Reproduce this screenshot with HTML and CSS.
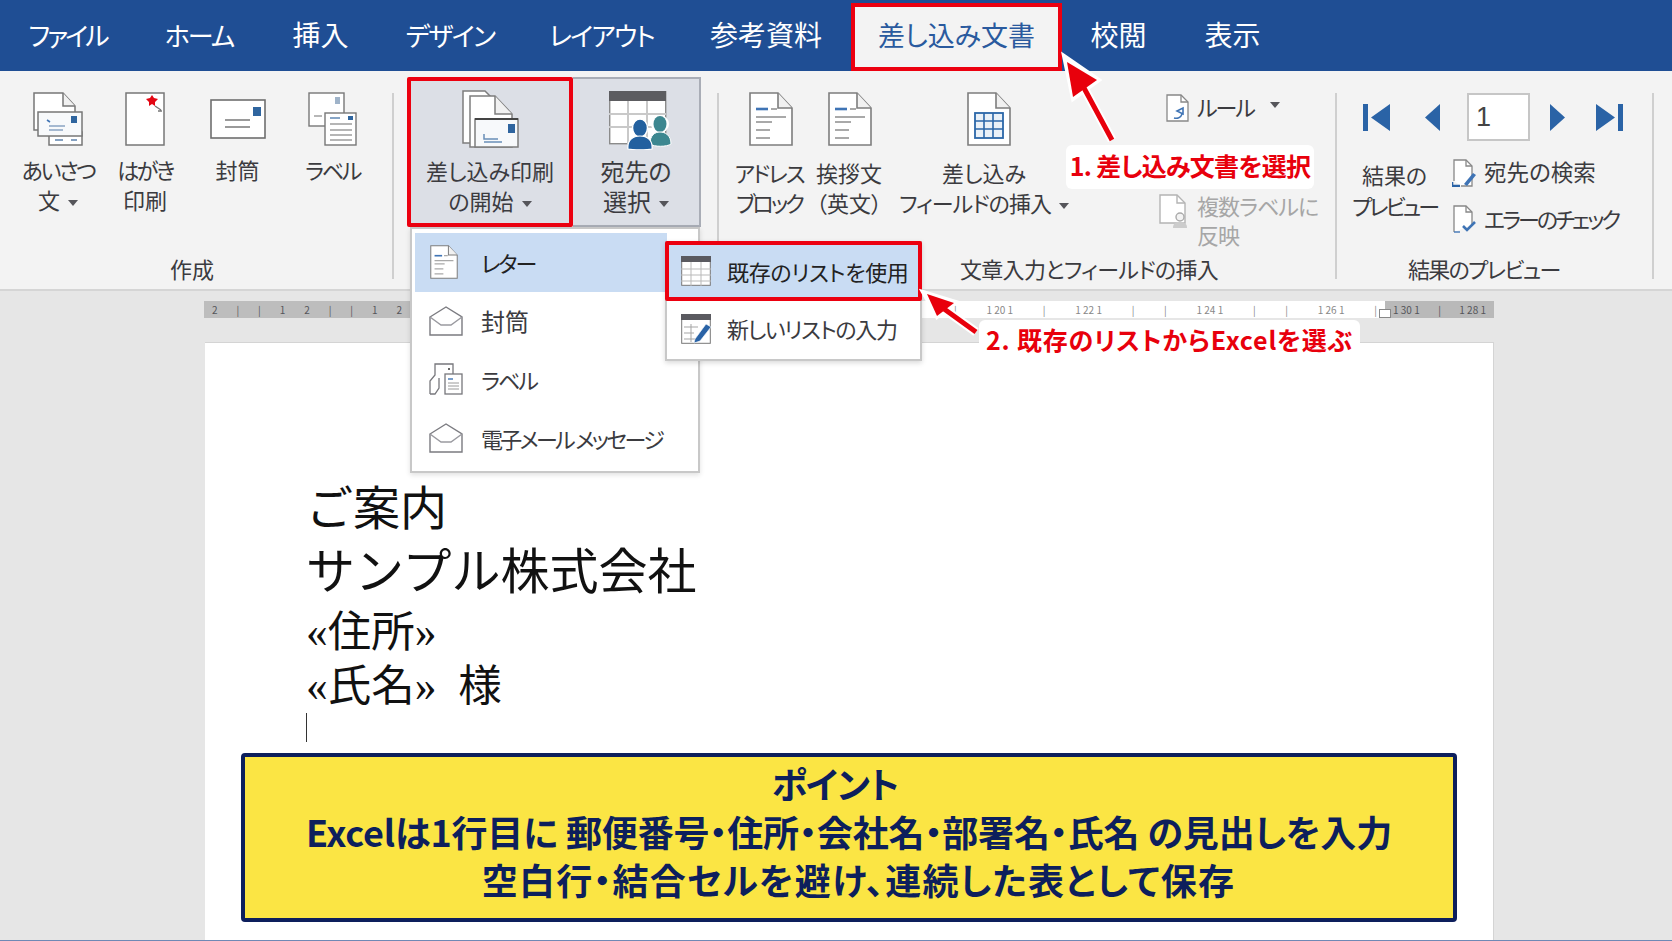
FILE: index.html
```html
<!DOCTYPE html>
<html lang="ja">
<head>
<meta charset="utf-8">
<title>差し込み文書</title>
<link rel="stylesheet" href="styles.css">
</head>
<body>
<svg class="defs" width="0" height="0" aria-hidden="true">
  <defs>
    <symbol id="page" viewBox="0 0 44 54">
      <path d="M1 1h28l14 15v37H1z" fill="#fff" stroke="#7d7d7d" stroke-width="1.6"/>
      <path d="M29 1v15h14" fill="#f1f1f1" stroke="#7d7d7d" stroke-width="1.6"/>
      <path d="M7 17h12" stroke="#3f74b5" stroke-width="2.6"/>
      <path d="M22 17h6M7 25h30M7 30h16M7 38h14M7 46h14" stroke="#a9a9a9" stroke-width="2"/>
    </symbol>
    <symbol id="openmail" viewBox="0 0 34 30">
      <path d="M1 11L17 1l16 10v18H1z" fill="#fff" stroke="#7b7b80" stroke-width="1.4"/>
      <path d="M1 11l11 8h10l11-8" fill="none" stroke="#9a9aa0" stroke-width="1.4"/>
    </symbol>
    <symbol id="tablehead" viewBox="0 0 30 30">
      <rect x=".7" y=".7" width="28.6" height="28.6" fill="#fff" stroke="#777"/>
      <rect x="0" y="0" width="30" height="6" fill="#5a5a60"/>
    </symbol>
  </defs>
</svg>

<div class="app">
  <nav class="tabs">
    <div class="tab kana k30">ファイル</div>
    <div class="tab kana k20">ホーム</div>
    <div class="tab">挿入</div>
    <div class="tab kana k16">デザイン</div>
    <div class="tab kana k17">レイアウト</div>
    <div class="tab">参考資料</div>
    <div class="tab tab-active">差し込み文書</div>
    <div class="tab">校閲</div>
    <div class="tab">表示</div>
  </nav>

  <section class="ribbon">
    <div class="group group-create">
      <div class="group-body">
        <div class="rbtn w102">
          <div class="ricon">
            <svg width="50" height="54" viewBox="0 0 50 54">
              <path d="M1 1h29l12 13v24H1z" fill="#fff" stroke="#777" stroke-width="1.5"/>
              <path d="M30 1v13h12" fill="#f1f1f1" stroke="#777" stroke-width="1.5"/>
              <rect x="16" y="40" width="33" height="13" fill="#fff" stroke="#777" stroke-width="1.5"/>
              <rect x="5" y="20" width="44" height="24" fill="#f7f9fb" stroke="#777" stroke-width="1.5"/>
              <rect x="38" y="24" width="6" height="7" fill="#2f659f"/>
              <path d="M16 34h16M16 38h14" stroke="#8aa4c4" stroke-width="1.6"/>
              <path d="M14 28l3 2" stroke="#3f74b5" stroke-width="1.6"/>
              <path d="M38 48h6M22 48h8" stroke="#5d83ad" stroke-width="1.6"/>
            </svg>
          </div>
          <div class="rlabel"><span class="t24">あいさつ</span><br>文<i class="caret"></i></div>
        </div>
        <div class="rbtn w88">
          <div class="ricon">
            <svg width="40" height="54" viewBox="0 0 40 54">
              <rect x="1" y="1" width="38" height="52" fill="#fff" stroke="#777" stroke-width="1.5"/>
              <path d="M27 3l2 3 4 1-3 3 0 4-3-2-3 2 0-4-3-3 4-1z" fill="#e30613"/>
              <path d="M30 14l6 4M33 19h4" stroke="#777" stroke-width="1.4"/>
            </svg>
          </div>
          <div class="rlabel"><span class="t24">はがき</span><br>印刷</div>
        </div>
        <div class="rbtn w95">
          <div class="ricon">
            <svg width="56" height="40" viewBox="0 0 56 40">
              <rect x="1" y="1" width="54" height="38" fill="#fff" stroke="#6f6f6f" stroke-width="1.6"/>
              <rect x="43" y="8" width="8" height="9" fill="#2f659f"/>
              <path d="M15 21h25M15 28h25" stroke="#9a9a9a" stroke-width="1.8"/>
            </svg>
          </div>
          <div class="rlabel">封筒</div>
        </div>
        <div class="rbtn w95">
          <div class="ricon">
            <svg width="49" height="54" viewBox="0 0 49 54">
              <rect x="1" y="1" width="35" height="33" fill="#fff" stroke="#777" stroke-width="1.4"/>
              <path d="M27 5h5v7h-5z" fill="#9fb3c9"/>
              <path d="M6 24h8" stroke="#999" stroke-width="1.4"/>
              <rect x="17" y="21" width="31" height="32" fill="#fff" stroke="#777" stroke-width="1.4"/>
              <path d="M22 26h10" stroke="#6a8fb8" stroke-width="1.6"/>
              <rect x="40" y="24" width="5" height="4" fill="#2f659f"/>
              <path d="M22 32h22M22 38h22M22 43h22M22 48h22" stroke="#9d9d9d" stroke-width="1.4"/>
            </svg>
          </div>
          <div class="rlabel"><span class="t24">ラベル</span></div>
        </div>
      </div>
      <div class="group-title title-create">作成</div>
    </div>
    <div class="sep"></div>

    <div class="group group-start">
      <div class="start-buttons">
        <div class="rbtn start-main">
          <div class="ricon ricon-start">
            <svg width="57" height="58" viewBox="0 0 57 58">
              <path d="M1 1h22l8 8v44H1z" fill="#fff" stroke="#7d7d7d" stroke-width="1.5"/>
              <path d="M8 6h25l17 18v33H8z" fill="#fff" stroke="#7d7d7d" stroke-width="1.5"/>
              <path d="M33 6v18h17" fill="#f1f1f1" stroke="#7d7d7d" stroke-width="1.5"/>
              <rect x="13" y="29" width="43" height="28" fill="#f7f9fb" stroke="#7d7d7d" stroke-width="1.5"/>
              <path d="M13 29h43" stroke="#444" stroke-width="1.8"/>
              <rect x="46" y="34" width="7" height="9" fill="#2f659f"/>
              <path d="M22 44v5h14M22 52h18" stroke="#6a8fb8" stroke-width="1.5" fill="none"/>
            </svg>
          </div>
          <div class="rlabel">差し込み印刷<br>の開始<i class="caret"></i></div>
        </div>
        <div class="rbtn start-side">
          <div class="ricon ricon-start ricon-people">
            <svg width="63" height="59" viewBox="0 0 63 59">
              <rect x=".7" y=".7" width="56" height="52" fill="#fff" stroke="#8b8b8b" stroke-width="1.4"/>
              <rect x="0" y="0" width="57" height="10" fill="#5c5c60"/>
              <path d="M0 23h57M0 36h57M19 10v43M38 10v43" stroke="#c9c9c9" stroke-width="2"/>
              <circle cx="51" cy="33" r="9" fill="#fff"/>
              <ellipse cx="51" cy="33" rx="6.5" ry="8" fill="#3d8790"/>
              <path d="M41 53c0-9 5-12 10-12s11 3 11 12c-4 3-17 3-21 0z" fill="#3d8790" stroke="#fff" stroke-width="1"/>
              <ellipse cx="31" cy="37" rx="7.5" ry="9" fill="#22609f" stroke="#fff" stroke-width="1.5"/>
              <path d="M19 58c-1-9 5-13 12-13s13 4 12 13c-5 1-19 1-24 0z" fill="#22609f" stroke="#fff" stroke-width="1.2"/>
            </svg>
          </div>
          <div class="rlabel">宛先の<br>選択<i class="caret"></i></div>
        </div>
      </div>
    </div>
    <div class="sep"></div>

    <div class="group group-fields">
      <div class="group-body fields-body">
        <div class="rbtn w80">
          <div class="ricon ricon-field nudge-a"><svg width="44" height="54"><use href="#page"/></svg></div>
          <div class="rlabel"><span class="t20">アドレス</span><br><span class="t30">ブロック</span></div>
        </div>
        <div class="rbtn w80">
          <div class="ricon ricon-field nudge-b"><svg width="44" height="54"><use href="#page"/></svg></div>
          <div class="rlabel">挨拶文<br>（英文）</div>
        </div>
        <div class="rbtn w190">
          <div class="ricon ricon-field nudge-c">
            <svg width="44" height="54" viewBox="0 0 44 54">
              <path d="M1 1h28l14 15v37H1z" fill="#fff" stroke="#7d7d7d" stroke-width="1.6"/>
              <path d="M29 1v15h14" fill="#f1f1f1" stroke="#7d7d7d" stroke-width="1.6"/>
              <rect x="8" y="21" width="28" height="25" fill="#eaf1f8" stroke="#2b66a8" stroke-width="1.8"/>
              <path d="M8 29h28M8 37h28M17 21v25M26 21v25" stroke="#2b66a8" stroke-width="1.6"/>
            </svg>
          </div>
          <div class="rlabel">差し込み<br><span class="t10">フィールドの挿入</span><i class="caret"></i></div>
        </div>
        <div class="small-col">
          <div class="small-row">
            <svg class="small-icon" width="24" height="28" viewBox="0 0 24 28">
              <path d="M1 1h14l7 7v19H1z" fill="#fff" stroke="#888" stroke-width="1.3"/>
              <path d="M15 1v7h7" fill="none" stroke="#888" stroke-width="1.3"/>
              <path d="M11 17l6-3v6zM8 24c4 1 7-1 8-4" fill="none" stroke="#3f74b5" stroke-width="1.6"/>
            </svg>
            <span class="small-text t20">ルール</span><i class="caret caret-far"></i>
          </div>
          <i class="hidden-row"></i>
          <div class="small-row small-row-off">
            <svg class="small-icon" width="28" height="35" viewBox="0 0 28 35">
              <path d="M1 1h17l8 8v20H1z" fill="#fff" stroke="#b4b4b4" stroke-width="1.4"/>
              <path d="M18 1v8h8" fill="none" stroke="#b4b4b4" stroke-width="1.4"/>
              <circle cx="21" cy="23" r="4" fill="#f3f3f3" stroke="#aaa" stroke-width="1.4"/>
              <path d="M14 34c0-5 3-6 7-6s7 1 7 6z" fill="#ccc"/>
            </svg>
            <span class="small-text t10">複数ラベルに<br>反映</span>
          </div>
        </div>
      </div>
      <div class="group-title title-fields t07">文章入力とフィールドの挿入</div>
    </div>
    <div class="sep"></div>

    <div class="group group-preview">
      <div class="pager">
        <svg class="nav-first" width="27" height="27" viewBox="0 0 27 27"><path d="M0 0h5v27H0zM27 0v27L8 13.500z" fill="#2a63a6"/></svg>
        <svg class="nav-prev" width="15" height="27" viewBox="0 0 15 27"><path d="M15 0v27L0 13.500z" fill="#2a63a6"/></svg>
        <div class="pager-input">1</div>
        <svg class="nav-next" width="15" height="27" viewBox="0 0 15 27"><path d="M0 0v27l15-13.500z" fill="#2a63a6"/></svg>
        <svg class="nav-last" width="27" height="27" viewBox="0 0 27 27"><path d="M22 0h5v27h-5zM0 0v27l19-13.500z" fill="#2a63a6"/></svg>
      </div>
      <div class="preview-body">
        <div class="rlabel preview-big">結果の<br><span class="t30">プレビュー</span></div>
        <div class="preview-list">
          <div class="preview-row">
            <svg width="25" height="28" viewBox="0 0 25 28">
              <path d="M2 22V1h12l6 6v20H9" fill="#fff" stroke="#888" stroke-width="1.3"/>
              <path d="M14 1v6h6" fill="none" stroke="#888" stroke-width="1.3"/>
              <path d="M0 23v4h8" fill="none" stroke="#2a63a6" stroke-width="2.6"/>
              <path d="M12 25l9-11 3 2-9 11z" fill="#3f74b5"/>
            </svg>
            <span class="row-wide">宛先の検索</span>
          </div>
          <div class="preview-row">
            <svg width="25" height="28" viewBox="0 0 25 28">
              <path d="M2 27V1h12l6 6v13" fill="#fff" stroke="#888" stroke-width="1.3"/>
              <path d="M14 1v6h6" fill="none" stroke="#888" stroke-width="1.3"/>
              <path d="M11 21l4 4 8-8" fill="none" stroke="#3f74b5" stroke-width="2.6"/>
              <path d="M2 27h6" stroke="#3f74b5" stroke-width="1.4"/>
            </svg>
            <span class="t30">エラーのチェック</span>
          </div>
        </div>
      </div>
      <div class="group-title title-preview t17">結果のプレビュー</div>
    </div>
    <div class="sep"></div>
  </section>

  <main class="doc">
    <div class="ruler">
      <div class="ruler-seg ruler-left"><span>2</span><span>|</span><span>|</span><span>1</span><span>2</span><span>|</span><span>|</span><span>1</span><span>2</span></div>
      <div class="ruler-seg ruler-mid"><span>|</span><span>1 20 1</span><span>|</span><span>1 22 1</span><span>|</span><span>|</span><span>1 24 1</span><span>|</span><span>|</span><span>1 26 1</span><span>|</span><i class="indent"></i></div>
      <div class="ruler-seg ruler-right"><span>1 30 1</span><span>|</span><span>1 28 1</span></div>
    </div>
    <article class="page">
      <p class="l1">ご案内</p>
      <p class="l2">サンプル株式会社</p>
      <p class="l3">«住所»</p>
      <p class="l3">«氏名»&nbsp;&nbsp;様</p>
      <div class="cursor"></div>
      <div class="point">
        <p class="point-head">ポイント</p>
        <p class="point-main">Excelは1行目に 郵便番号・住所・会社名・部署名・氏名 の見出しを入力</p>
        <p class="point-sub">空白行・結合セルを避け、連続した表として保存</p>
      </div>
    </article>
  </main>

  <div class="menu">
    <div class="menu-row menu-row-on">
      <svg width="30" height="34"><use href="#page" width="30" height="34"/></svg><span class="t20">レター</span>
    </div>
    <div class="menu-row">
      <svg width="34" height="30"><use href="#openmail"/></svg><span class="wide-row">封筒</span>
    </div>
    <div class="menu-row">
      <svg width="34" height="32" viewBox="0 0 34 32">
        <path d="M1 31V18l5-6V1h18v10" fill="none" stroke="#77777c" stroke-width="1.3"/>
        <path d="M1 31h5l4-6V15" fill="none" stroke="#77777c" stroke-width="1.3"/>
        <rect x="16" y="11" width="17" height="20" fill="#fff" stroke="#77777c" stroke-width="1.3"/>
        <path d="M19 16h5" stroke="#3f74b5" stroke-width="1.4"/>
        <path d="M19 20h11M19 23h11M19 26h11" stroke="#9a9a9a"/>
        <rect x="19" y="5" width="2" height="2" fill="#666"/>
      </svg><span class="t20">ラベル</span>
    </div>
    <div class="menu-row">
      <svg width="34" height="30"><use href="#openmail"/></svg><span class="t27">電子メール メッセージ</span>
    </div>
  </div>

  <div class="submenu">
    <div class="sub-row sub-row-on">
      <svg width="30" height="30" viewBox="0 0 30 30">
        <use href="#tablehead" width="30" height="30"/>
        <path d="M0 13h30M0 19h30M0 25h30M10 6v24M20 6v24" stroke="#b9b9b9"/>
      </svg><span class="t03">既存のリストを使用</span>
    </div>
    <div class="sub-row sub-row-new">
      <svg width="30" height="30" viewBox="0 0 30 30">
        <use href="#tablehead" width="30" height="30"/>
        <path d="M3 13h14M3 19h10M3 25h14M10 10v18" stroke="#a5a5a5"/>
        <path d="M14 25l11-15 5 3-11 14-6 2z" fill="#2a63a6" stroke="#fff" stroke-width=".6"/>
      </svg><span class="t13">新しいリストの入力</span>
    </div>
  </div>

  <div class="note note-one">1. 差し込み文書を選択</div>
  <div class="note note-two">2. 既存のリストからExcelを選ぶ</div>

  <svg class="arrows" width="1672" height="941" viewBox="0 0 1672 941" aria-hidden="true">
    <g fill="none" stroke="#fff" stroke-width="9">
      <path d="M1112 140L1084 88"/>
      <path d="M976 332L940 306"/>
    </g>
    <path d="M1064 56l35 24-26 19z" fill="#fff" stroke="#fff" stroke-width="4"/>
    <path d="M923 292l33 10-19 15z" fill="#fff" stroke="#fff" stroke-width="4"/>
    <path d="M1112 140L1084 88M976 332L940 306" fill="none" stroke="#e8000c" stroke-width="5"/>
    <path d="M1067 62l30 18-24 17z" fill="#e8000c"/>
    <path d="M927 294l27 9-17 13z" fill="#e8000c"/>
  </svg>
</div>
</body>
</html>
```

FILE: styles.css
```css
* { box-sizing: border-box; }
html, body { margin: 0; padding: 0; }
body {
  font-family: "Noto Sans CJK JP", "Liberation Sans", sans-serif;
  font-feature-settings: "palt";
  color: #3b3b3f;
}
p { margin: 0; }
.defs { position: absolute; }

/* tightening that stands in for the narrow kana of the original UI font */
.t03 { letter-spacing: -.3px; }
.t07 { letter-spacing: -.7px; }
.t10 { letter-spacing: -1px; }
.t13 { letter-spacing: -1.300px; }
.t17 { letter-spacing: -1.700px; }
.t20 { letter-spacing: -2px; }
.t24 { letter-spacing: -2.400px; }
.t27 { letter-spacing: -2.700px; }
.t30 { letter-spacing: -3px; }

.app {
  position: relative;
  width: 1672px;
  height: 941px;
  overflow: hidden;
  display: flex;
  flex-direction: column;
  background: #e6e6e6;
  border-bottom: 1px solid #6f88b5;
}

/* tabs */
.tabs {
  flex: none;
  height: 71px;
  display: grid;
  grid-template-columns: 135px 128px 115px 144px 159px 170px 211px 113px 115px;
  background: #1f4e94;
  color: #fff;
  font-size: 28px;
}
.tab {
  display: flex;
  align-items: center;
  justify-content: center;
  padding-bottom: 3px;
}
.kana { font-size: 26px; }
.k16 { letter-spacing: -1.600px; }
.k17 { letter-spacing: -1.700px; }
.k20 { letter-spacing: -2px; }
.k30 { letter-spacing: -3px; }
.tab-active {
  margin-top: 3px;
  background: #f3f3f3;
  color: #2a5a9e;
  border: 4px solid #ec0010;
  padding-bottom: 6px;
  font-size: 27px;
}

/* ribbon */
.ribbon {
  flex: none;
  height: 220px;
  display: flex;
  background: #f3f3f3;
  border-bottom: 2px solid #d5d5d5;
}
.sep {
  flex: none;
  width: 2px;
  margin: 22px 0 10px;
  background: #cfcfcf;
}
.group { position: relative; flex: none; }
.group-create { width: 392px; }
.group-start { width: 323px; padding: 6px 0 0 13px; }
.group-fields { width: 616px; }
.group-preview { width: 315px; padding-top: 22px; }
.group-body { display: flex; padding-top: 17px; }
.fields-body { padding-left: 10px; }

.rbtn {
  flex: none;
  display: flex;
  flex-direction: column;
  align-items: center;
}
.w102 { width: 116px; }
.w88 { width: 88px; margin-left: -15px; margin-right: 1px; }
.w95 { width: 95px; }
.w80 { width: 80px; }
.w190 { width: 190px; }
.ricon {
  height: 62px;
  display: flex;
  align-items: center;
  justify-content: center;
}
.ricon-field { margin-bottom: 3px; }
.nudge-a { margin-left: 3px; }
.nudge-b { margin-left: 1px; }
.nudge-c { margin-left: 9px; }
.rlabel {
  margin-top: 4px;
  font-size: 22px;
  line-height: 30px;
  text-align: center;
  white-space: nowrap;
}
.caret {
  display: inline-block;
  width: 0;
  height: 0;
  margin-left: 8px;
  vertical-align: middle;
  border-top: 6px solid #55555a;
  border-left: 5.500px solid transparent;
  border-right: 5.500px solid transparent;
}
.group-title {
  position: absolute;
  top: 182px;
  font-size: 22px;
  line-height: 30px;
  white-space: nowrap;
}
.title-create { left: 170px; }
.title-fields { left: 241px; }
.title-preview { left: 71px; }

/* start mail merge */
.start-buttons { display: flex; height: 150px; }
.start-main {
  width: 166px;
  background: #dcdfe6;
  border: 4px solid #ec0010;
  border-radius: 2px;
}
.start-side {
  width: 128px;
  background: #dcdfe6;
  border: 2px solid #a9adb6;
  border-left: none;
}
.ricon-start { margin-top: 5px; height: 65px; }
.ricon-people { margin: 9px 0 0 8px; }
.start-main .rlabel { margin-top: 4px; }
.start-side .rlabel { margin-top: 3px; font-size: 24px; }

/* small field column */
.small-col {
  margin-left: 80px;
  display: flex;
  flex-direction: column;
}
.small-row {
  display: flex;
  align-items: flex-start;
  gap: 10px;
  font-size: 22px;
  line-height: 30px;
}
.small-icon { flex: none; margin-top: 6px; }
.small-row:first-child { margin-top: 3px; }
.small-row:first-child .small-icon { margin-top: 3px; margin-left: 7px; }
.small-row:first-child .small-text { margin-left: -3px; }
.caret-far { margin: 11px 0 0 6px; }
.hidden-row {
  width: 14px;
  height: 1px;
  margin: 24px 0 0 7px;
  background: #aaa;
}
.small-row-off { margin-top: 44px; color: #a6a6a6; line-height: 29px; }
.small-row-off .small-icon { margin-top: 3px; }

/* preview */
.pager {
  display: flex;
  align-items: center;
  height: 48px;
}
.nav-first { margin-left: 26px; }
.nav-prev { margin-left: 35px; }
.pager-input {
  width: 63px;
  height: 48px;
  margin-left: 27px;
  padding-left: 7px;
  background: #fff;
  border: 2px solid #c6c6c6;
  color: #444;
  font-family: "Liberation Sans", sans-serif;
  font-size: 27px;
  line-height: 44px;
}
.nav-next { margin-left: 20px; }
.nav-last { margin-left: 31px; }
.preview-body { display: flex; margin-top: 19px; }
.preview-big {
  width: 115px;
  margin-top: -1px;
  line-height: 31px;
}
.preview-list {
  display: flex;
  flex-direction: column;
  gap: 18px;
  margin-top: -1px;
}
.preview-row {
  display: flex;
  align-items: center;
  gap: 7px;
  height: 28px;
  padding-bottom: 3px;
  font-size: 22px;
  white-space: nowrap;
}
.preview-row svg { flex: none; margin-top: 3px; }
.row-wide { font-size: 22.500px; margin-bottom: 2px; }

/* document */
.doc {
  flex: 1;
  display: flex;
  flex-direction: column;
  align-items: flex-start;
  padding: 10px 0 0 204px;
  min-height: 0;
}
.ruler {
  flex: none;
  width: 1290px;
  height: 17px;
  display: flex;
  font-size: 10px;
  line-height: 17px;
  color: #55555a;
}
.ruler-seg { display: flex; justify-content: space-between; padding: 0 8px; }
.ruler-left { width: 206px; background: #bdbdbd; }
.ruler-mid {
  position: relative;
  flex: 1;
  background: #fff;
  padding-left: 544px;
  color: #888;
}
.ruler-right { width: 109px; background: #b9b9b9; }
.indent {
  position: absolute;
  right: -6px;
  top: 8px;
  width: 12px;
  height: 9px;
  background: #fff;
  border: 1px solid #888;
}
.page {
  flex: 1;
  width: 1289px;
  margin: 24px 0 0 1px;
  padding-top: 134px;
  background: #fff;
  border-top: 1px solid #d4d4d4;
  border-right: 1px solid #d4d4d4;
  color: #111;
  overflow: hidden;
  font-family: "Liberation Serif", "Noto Sans CJK JP", serif;
  font-feature-settings: normal;
}
.page > p { margin-left: 101px; white-space: nowrap; }
.l1 { font-size: 47px; line-height: 64px; }
.l2 { font-size: 49px; line-height: 64px; }
.l3 { font-size: 43.500px; line-height: 54px; }
.cursor { width: 1px; height: 29px; margin-left: 101px; background: #333; }
.point {
  width: 1216px;
  height: 169px;
  margin: 11px 0 0 36px;
  padding-top: 2px;
  background: #fbe544;
  border: 4px solid #0d1f5c;
  border-radius: 4px;
  color: #0d1f5c;
  font-family: "Noto Sans CJK JP", "Liberation Sans", sans-serif;
  font-feature-settings: "palt";
  font-size: 36px;
  font-weight: 700;
  line-height: 48px;
  text-align: center;
  white-space: nowrap;
}
.point-head { padding-right: 28px; letter-spacing: -1px; }
.point-main { letter-spacing: -.14px; }
.point-sub { padding-left: 19px; letter-spacing: 1.200px; }

/* dropdown */
.menu {
  position: absolute;
  left: 410px;
  top: 227px;
  width: 290px;
  height: 246px;
  padding: 4px 0 0 3px;
  background: #fff;
  border: 2px solid #c8c8c8;
  box-shadow: 0 2px 5px rgba(0, 0, 0, .12);
}
.menu-row {
  display: flex;
  align-items: center;
  width: 252px;
  height: 58.500px;
  padding-left: 14px;
  font-size: 22px;
  white-space: nowrap;
}
.menu-row svg { flex: none; width: 34px; margin-right: 18px; }
.menu-row-on { background: #c9dcf3; color: #222; }
.wide-row { font-size: 24px; }
.submenu {
  position: absolute;
  left: 665px;
  top: 241px;
  width: 257px;
  height: 120px;
  background: #fff;
  border: 2px solid #c8c8c8;
  border-top: none;
  box-shadow: 0 2px 5px rgba(0, 0, 0, .15);
}
.sub-row {
  display: flex;
  align-items: center;
  gap: 16px;
  height: 59px;
  padding-left: 14px;
  font-size: 22px;
  white-space: nowrap;
}
.sub-row-new span { margin-bottom: 5px; }
.sub-row-new svg { margin-bottom: 3px; }
.sub-row-on {
  margin: 0 -2px;
  height: 60px;
  padding-left: 12px;
  background: #c9dcf3;
  border: 4px solid #ec0010;
  border-radius: 2px;
  color: #222;
}

/* annotations */
.note {
  position: absolute;
  display: flex;
  align-items: center;
  justify-content: center;
  background: #fff;
  border-radius: 6px;
  color: #e8000c;
  font-size: 25px;
  font-weight: 700;
  white-space: nowrap;
}
.note-one { left: 1066px; top: 145px; width: 248px; height: 44px; padding-bottom: 4px; letter-spacing: -.7px; }
.note-two { left: 979px; top: 320px; width: 381px; height: 37px; letter-spacing: .8px; }
.arrows { position: absolute; left: 0; top: 0; pointer-events: none; }
```
